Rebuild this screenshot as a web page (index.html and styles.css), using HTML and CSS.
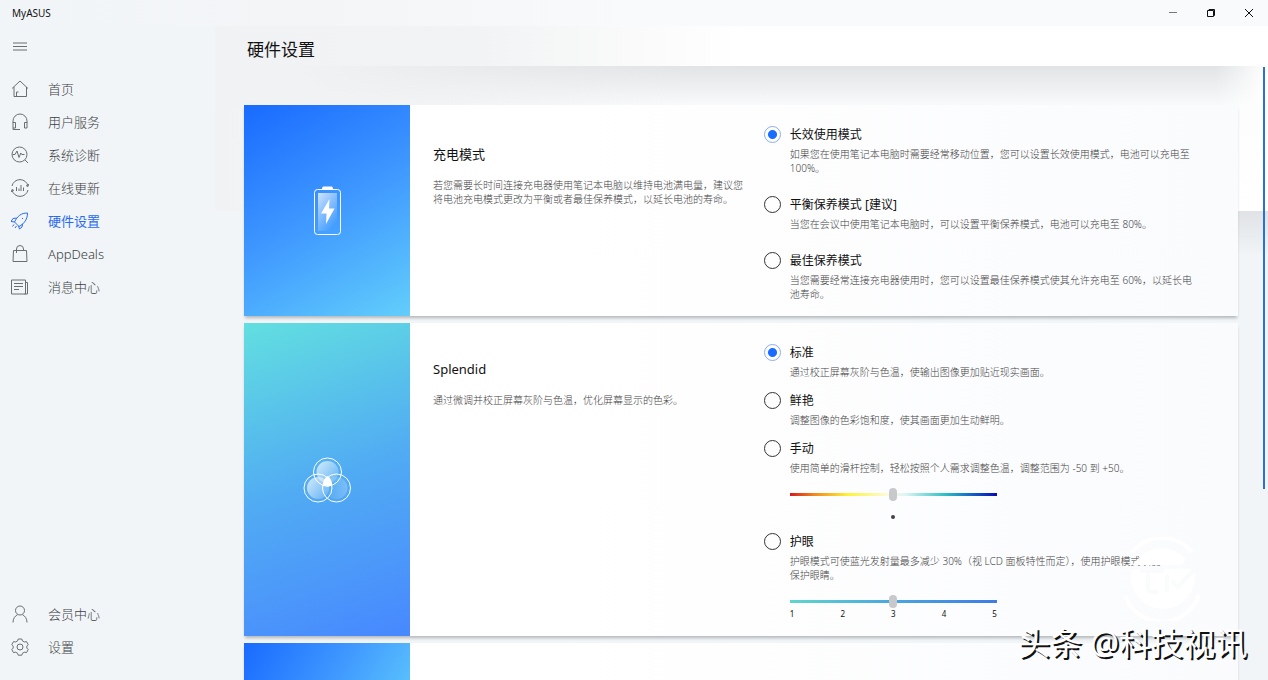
FILE: index.html
```
<!DOCTYPE html>
<html lang="zh-CN">
<head>
    <meta charset="UTF-8">
    <meta name="viewport" content="width=device-width, initial-scale=1.0">
    <title>MyASUS</title>
    <link rel="stylesheet" href="styles.css">
</head>
<body>
    <header class="titlebar">
        <span class="app-name">MyASUS</span>
        <div class="window-buttons">
            <button type="button" aria-label="最小化"><svg width="10" height="10" viewBox="0 0 10 10"><path class="thin" d="M1 4.500h8"/></svg></button>
            <button type="button" aria-label="还原"><svg width="10" height="10" viewBox="0 0 10 10"><path d="M1.500 2.500h6v6h-6zM3 2.500v-1h5.500v6h-1"/></svg></button>
            <button type="button" aria-label="关闭"><svg width="10" height="10" viewBox="0 0 10 10"><path d="M1 1l8 8M9 1l-8 8"/></svg></button>
        </div>
    </header>
    <div class="shell">
        <aside class="sidebar">
            <button type="button" class="menu-button" aria-label="菜单">
                <svg width="18" height="18" viewBox="0 0 18 18"><path d="M2 6h14M2 9.500h14M2 13h14"/></svg>
            </button>
            <nav class="nav">
                <a href="#">
                    <svg width="18" height="18" viewBox="0 0 18 18"><path d="M1 8.500L9 1l8 7.500M3 7v9.500h12.500V7M5.500 16v-4h2"/></svg>
                    <span>首页</span>
                </a>
                <a href="#">
                    <svg width="18" height="18" viewBox="0 0 18 18"><path d="M2 10V8a7 7 0 0 1 14 0v2M2 9.500h2.500V15H2zM16 9.500h-2.500V15H16zM2 15v1.500h7"/></svg>
                    <span>用户服务</span>
                </a>
                <a href="#">
                    <svg width="18" height="18" viewBox="0 0 18 18"><circle cx="8.500" cy="8.500" r="7.500"/><path d="M14 14l3 3M1.500 8.500h2.500l2-3.500 2 6.500 1.800-4.500 1 1.500h2.700"/></svg>
                    <span>系统诊断</span>
                </a>
                <a href="#">
                    <svg width="18" height="18" viewBox="0 0 18 18"><path d="M1 7a8.200 8.200 0 0 1 16 0M17 11a8.200 8.200 0 0 1-16 0M17.500 5L17 7.500l-2-1M.5 13l.5-2.500 2 1M5.500 12V8M8 12V9.500M10 12V6M12.500 12V8.500"/></svg>
                    <span>在线更新</span>
                </a>
                <a href="#" class="active" aria-current="page">
                    <svg width="18" height="18" viewBox="0 0 18 18"><path d="M16.500 1C10 1 6.500 4 3.500 10L8 14.500C13.500 11.500 16.500 7 16.500 1zM5.500 6L2 6.500 0 9.500l3.500.5M11.500 12l-.5 3-2.500 2-1-3M11 6.500h1M3 12.500L1.500 14.500M5.500 14L4 16"/></svg>
                    <span>硬件设置</span>
                </a>
                <a href="#">
                    <svg width="18" height="18" viewBox="0 0 18 18"><path d="M2.500 5.500h13l.5 11H2zM5.500 8V4a3.500 3.500 0 0 1 7 0v1.500"/></svg>
                    <span>AppDeals</span>
                </a>
                <a href="#">
                    <svg width="18" height="18" viewBox="0 0 18 18"><path d="M.5 2h14v14H.5zM14.500 4.500h2V16h-3M3 5.500h9M3 8.500h9M3 11.500h5"/></svg>
                    <span>消息中心</span>
                </a>
            </nav>
            <nav class="nav nav-bottom">
                <a href="#">
                    <svg width="18" height="18" viewBox="0 0 18 18"><circle cx="9" cy="5.500" r="4.500"/><path d="M2 17.500c0-4 2-6.500 4.500-7.800M16 17.500c0-4-2-6.500-4.500-7.800"/></svg>
                    <span>会员中心</span>
                </a>
                <a href="#">
                    <svg width="18" height="18" viewBox="0 0 18 18"><path d="M7.200 1h3.600l.7 2 1.800 1 2.200-.4 1.700 3L15.800 8.200v1.800l1.400 1.600-1.700 3-2.200-.4-1.800 1-.7 2H7.200l-.7-2-1.800-1-2.200.4-1.700-3L2.200 10V8.200L.8 6.600l1.700-3 2.200.4 1.800-1z"/><circle cx="9" cy="9" r="3"/></svg>
                    <span>设置</span>
                </a>
            </nav>
        </aside>
        <main class="main">
            <h1 class="page-title">硬件设置</h1>
            <div class="cards">
                <section class="card">
                    <div class="visual visual-battery">
                        <svg width="28" height="50" viewBox="0 0 28 50">
                            <defs>
                                <linearGradient id="charge" x1="0" y1="0" x2="0.600" y2="1">
                                    <stop offset="0" stop-color="#fff" stop-opacity=".75"/>
                                    <stop offset="1" stop-color="#fff" stop-opacity="0"/>
                                </linearGradient>
                            </defs>
                            <path d="M9 3c0-2 1-2.500 2-2.500h7c1 0 2 .5 2 2.500z" fill="#fff"/>
                            <rect x="1.500" y="3.500" width="26" height="45" rx="3" fill="none" stroke="#fff"/>
                            <rect x="5" y="7" width="19" height="38" fill="url(#charge)"/>
                            <path d="M16.500 13L8 27.500h5.500L13 38l8.500-15.500H16z" fill="#fff"/>
                        </svg>
                    </div>
                    <div class="details">
                        <h2>充电模式</h2>
                        <p>若您需要长时间连接充电器使用笔记本电脑以维持电池满电量，建议您将电池充电模式更改为平衡或者最佳保养模式，以延长电池的寿命。</p>
                    </div>
                    <div class="options">
                        <div class="option">
                            <input type="radio" name="charge" id="charge-full" checked>
                            <label for="charge-full">长效使用模式</label>
                            <p>如果您在使用笔记本电脑时需要经常移动位置，您可以设置长效使用模式，电池可以充电至 100%。</p>
                        </div>
                        <div class="option">
                            <input type="radio" name="charge" id="charge-balanced">
                            <label for="charge-balanced">平衡保养模式 [建议]</label>
                            <p>当您在会议中使用笔记本电脑时，可以设置平衡保养模式，电池可以充电至 80%。</p>
                        </div>
                        <div class="option">
                            <input type="radio" name="charge" id="charge-best">
                            <label for="charge-best">最佳保养模式</label>
                            <p>当您需要经常连接充电器使用时，您可以设置最佳保养模式使其允许充电至 60%，以延长电池寿命。</p>
                        </div>
                    </div>
                </section>
                <section class="card compact">
                    <div class="visual visual-splendid">
                        <svg width="48" height="46" viewBox="0 0 48 46">
                            <defs>
                                <linearGradient id="lens" x1="0" y1="0" x2="1" y2="0.800">
                                    <stop offset="0" stop-color="#fff" stop-opacity=".75"/>
                                    <stop offset="1" stop-color="#fff" stop-opacity=".15"/>
                                </linearGradient>
                                <linearGradient id="lens-dim">
                                    <stop offset="0" stop-color="#fff" stop-opacity="0"/>
                                    <stop offset="1" stop-color="#fff" stop-opacity=".25"/>
                                </linearGradient>
                            </defs>
                            <circle cx="24.500" cy="15" r="11" fill="url(#lens)"/>
                            <circle cx="15" cy="31" r="11" fill="url(#lens)"/>
                            <circle cx="33.500" cy="31" r="11" fill="url(#lens-dim)"/>
                            <path d="M24.500 19c3 2 5 6 4.500 9.500-3 1.500-6 1.500-9 0C19.500 25 21.500 21 24.500 19z" fill="#fff"/>
                            <g fill="none" stroke="#fff">
                                <circle cx="24.500" cy="15" r="14"/>
                                <circle cx="15" cy="31" r="14"/>
                                <circle cx="33.500" cy="31" r="14"/>
                            </g>
                        </svg>
                    </div>
                    <div class="details">
                        <h2>Splendid</h2>
                        <p>通过微调并校正屏幕灰阶与色温，优化屏幕显示的色彩。</p>
                    </div>
                    <div class="options">
                        <div class="option">
                            <input type="radio" name="splendid" id="color-normal" checked>
                            <label for="color-normal">标准</label>
                            <p>通过校正屏幕灰阶与色温，使输出图像更加贴近现实画面。</p>
                        </div>
                        <div class="option">
                            <input type="radio" name="splendid" id="color-vivid">
                            <label for="color-vivid">鲜艳</label>
                            <p>调整图像的色彩饱和度，使其画面更加生动鲜明。</p>
                        </div>
                        <div class="option">
                            <input type="radio" name="splendid" id="color-manual">
                            <label for="color-manual">手动</label>
                            <p>使用简单的滑杆控制，轻松按照个人需求调整色温，调整范围为 -50 到 +50。</p>
                            <div class="slider">
                                <input type="range" class="temperature" min="-50" max="50" value="0" aria-label="色温">
                                <div class="midpoint"></div>
                            </div>
                        </div>
                        <div class="option">
                            <input type="radio" name="splendid" id="color-eyecare">
                            <label for="color-eyecare">护眼</label>
                            <p>护眼模式可使蓝光发射量最多减少 30%（视 LCD 面板特性而定），使用护眼模式以便<br>保护眼睛。</p>
                            <div class="slider">
                                <input type="range" class="eyecare" min="1" max="5" value="3" aria-label="护眼等级">
                                <div class="ticks"><span>1</span><span>2</span><span>3</span><span>4</span><span>5</span></div>
                            </div>
                        </div>
                    </div>
                </section>
                <section class="card">
                    <div class="visual visual-next"></div>
                </section>
            </div>
        </main>
    </div>
    <div class="scroll-thumb"></div>
    <svg class="stamp" width="84" height="84" viewBox="0 0 84 84">
        <path d="M12 32h62a32 32 0 1 1-62 0z" fill="#fff"/>
        <path d="M18 22a32 32 0 0 1 48 0l-4 6H12z" fill="#fff"/>
        <path d="M12 15a39 39 0 0 1 60 0M5 58a39 39 0 0 0 74 0" fill="none" stroke="#fff" stroke-width="4"/>
        <path d="M20 34h24M28 36v14q0 5 5 5h5M47 55V38M52 44l6 6 20-22" fill="none" stroke="#fafbfc" stroke-width="4"/>
    </svg>
    <div class="credit">头条 @科技视讯</div>
</body>
</html>
```
FILE: styles.css
```
* {
    box-sizing: border-box;
}

body {
    margin: 0;
    height: 100vh;
    display: flex;
    flex-direction: column;
    overflow: hidden;
    position: relative;
    font-family: "Noto Sans", "Noto Sans CJK SC", sans-serif;
    color: #111;
    background: #f1f5f8;
}

h1, h2, p {
    margin: 0;
    font-weight: 400;
}

button {
    border: 0;
    padding: 0;
    background: none;
    cursor: pointer;
}

svg {
    display: block;
}

/* title bar */

.titlebar {
    display: flex;
    justify-content: space-between;
    align-items: center;
    height: 26px;
    padding-left: 12px;
    background: linear-gradient(90deg, #f2f5f8, #f3f5f7 25%, #f8fafc 50%);
}

.app-name {
    font-size: 10px;
}

.window-buttons {
    display: flex;
}

.window-buttons button {
    width: 38px;
    height: 26px;
    display: flex;
    align-items: center;
    justify-content: center;
}

.window-buttons path {
    fill: none;
    stroke: #111;
}

.window-buttons .thin {
    stroke: #777;
}

.shell {
    flex: 1;
    min-height: 0;
    display: flex;
}

/* sidebar */

.sidebar {
    width: 215px;
    flex-shrink: 0;
    display: flex;
    flex-direction: column;
    padding: 11px 0 17px;
    background: #f1f5f8;
}

.menu-button {
    width: 18px;
    margin: 0 11px 17px;
}

.sidebar svg {
    fill: none;
    stroke: #6a6e72;
    flex-shrink: 0;
}

.nav {
    display: flex;
    flex-direction: column;
}

.nav-bottom {
    margin-top: auto;
}

.nav a {
    display: flex;
    align-items: center;
    gap: 19px;
    height: 33px;
    padding: 0 11px;
    font-size: 13px;
    font-weight: 300;
    color: #3c3f42;
    text-decoration: none;
}

.nav a.active {
    font-weight: 400;
    color: #2a6af0;
}

.nav a.active svg {
    stroke: #2a6af0;
}

/* page */

.main {
    flex: 1;
    min-width: 0;
    display: flex;
    flex-direction: column;
    background:
        linear-gradient(90deg, #f0f2f4, rgba(240, 242, 244, 0) 40%) 0 0 / 100% 185px no-repeat,
        linear-gradient(90deg, #f1f5f8 3%, rgba(241, 245, 248, 0) 60%) 0 185px / 100% 45px no-repeat,
        linear-gradient(#e0e2e5, #f1f5f8) 0 185px / 100% 45px no-repeat,
        linear-gradient(#fafbfc, #fff) 0 0 / 100% 185px no-repeat,
        #f1f5f8;
}

.page-title {
    flex-shrink: 0;
    height: 40px;
    padding-left: 32px;
    font-size: 17px;
    line-height: 48px;
    background: linear-gradient(90deg, #f0f2f4, #f2f3f4 25%, #fff 50%);
}

.cards {
    flex: 1;
    min-height: 0;
    display: flex;
    flex-direction: column;
    gap: 7px;
    padding: 39px 30px 0 29px;
    overflow: hidden;
    background:
        linear-gradient(90deg, #f0f2f4 8%, rgba(240, 242, 244, 0) 45%, rgba(255, 255, 255, 0) 95%, #fff) 0 0 / 100% 39px no-repeat,
        linear-gradient(rgba(200, 203, 206, 0.5), rgba(240, 242, 245, 0.3)) 0 0 / 100% 39px no-repeat;
}

.card {
    flex-shrink: 0;
    display: grid;
    grid-template-columns: 166px minmax(0, 3fr) minmax(0, 4fr);
    background: linear-gradient(90deg, #fff 30%, #fafbfd);
    box-shadow: 0 3px 3px -1px rgba(0, 0, 0, 0.25);
}

.visual {
    display: flex;
    align-items: center;
    justify-content: center;
}

.visual-battery {
    background: linear-gradient(150deg, #196aff, #3f98ff 50%, #62cefb);
}

.visual-splendid {
    background: linear-gradient(160deg, #62dfe0, #51abf3 50%, #4788ff);
}

.visual-next {
    height: 90px;
    background: linear-gradient(120deg, #196aff, #3f98ff 50%, #62cefb);
}

.details {
    padding: 40px 20px 16px 23px;
}

.compact .details {
    padding-top: 37px;
}

.details h2 {
    font-size: 13px;
    line-height: 18px;
}

.details p {
    margin-top: 15px;
}

.details p,
.option p {
    font-size: 10px;
    line-height: 14px;
    font-weight: 300;
    color: #444;
}

.options {
    display: flex;
    flex-direction: column;
    gap: 20px;
    margin-left: -1px;
    padding: 20px 41px 15px 0;
}

.compact .options {
    gap: 12px;
    padding-bottom: 17px;
}

.option {
    display: grid;
    grid-template-columns: 17px minmax(0, 1fr);
    column-gap: 9px;
    align-items: center;
}

.option label {
    padding-top: 2px;
    font-size: 12px;
    line-height: 16px;
}

.option p {
    grid-column: 2;
    margin-top: 4px;
}

input[type="radio"] {
    appearance: none;
    width: 17px;
    height: 17px;
    margin: 0;
    border: 1px solid #333;
    border-radius: 50%;
}

input[type="radio"]:checked {
    border-color: #8eabf5;
    background: radial-gradient(circle, #1a6bff 4px, transparent 5px);
}

/* sliders */

.slider {
    grid-column: 2;
    width: 207px;
    margin-top: 11px;
}

input[type="range"] {
    appearance: none;
    display: block;
    width: 100%;
    height: 16px;
    margin: 0;
    background: none;
}

input[type="range"]::-webkit-slider-runnable-track {
    height: 3px;
}

input[type="range"]::-webkit-slider-thumb {
    appearance: none;
    width: 8px;
    height: 13px;
    margin-top: -5px;
    border-radius: 4px;
    background: #c8c9cb;
}

.temperature::-webkit-slider-runnable-track {
    background: linear-gradient(90deg, #d8191c, #f08a1d 12%, #fdf33a 28%, #fdfbe0 48%, #d9f5f3 56%, #2cc0c4 75%, #1469c8 87%, #0a0ab8);
}

.eyecare::-webkit-slider-runnable-track {
    background: linear-gradient(90deg, #5fd6cc, #4aa6e0 50%, #3f7be6);
}

.midpoint {
    width: 4px;
    height: 4px;
    margin: 13px auto 1px;
    border-radius: 50%;
    background: #444;
}

.ticks {
    display: flex;
    justify-content: space-between;
    font-size: 8px;
    line-height: 10px;
}

/* overlays */

.scroll-thumb {
    position: absolute;
    top: 67px;
    right: 3px;
    width: 2px;
    height: 62%;
    background: #2a6fdb;
}

.stamp {
    position: absolute;
    right: 64px;
    bottom: 59px;
}

.credit {
    position: absolute;
    right: 21px;
    bottom: 17px;
    font-size: 32px;
    line-height: 40px;
    color: #fff;
    text-shadow: 2px 2px 0 #111;
}
```
